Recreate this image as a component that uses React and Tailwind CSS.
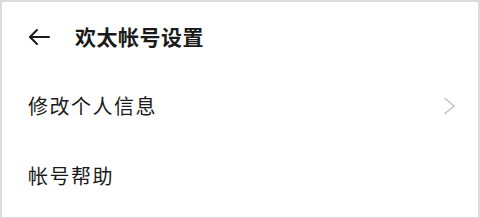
import React from "react";

export default function App() {
  const font = { fontFamily: '"Noto Sans CJK SC", "Noto Sans", sans-serif' };
  return (
    <div
      className="w-[480px] h-[218px] bg-white border-l-2 border-t-2 border-r-2 border-b border-[#dcdcdc] box-border overflow-hidden text-[#1a1a1a]"
      style={font}
    >
      <div className="h-[69px] flex items-center pl-[25px]">
        <svg width="24" height="18" viewBox="0 0 24 18" fill="none" stroke="#1a1a1a" strokeWidth="2" strokeLinecap="round" strokeLinejoin="round">
          <path d="M22 9H3" />
          <path d="M10 2L3 9l7 7" />
        </svg>
        <span className="ml-[24px] text-[21px] font-bold tracking-[0.5px] leading-none">欢太帐号设置</span>
      </div>
      <div className="h-[70px] flex items-center justify-between pl-[26px] pr-[22px]">
        <span className="text-[20px] leading-none tracking-[1.5px]">修改个人信息</span>
        <svg width="13" height="18" viewBox="0 0 13 18" fill="none" stroke="#c4c4c4" strokeWidth="1.6" strokeLinecap="round" strokeLinejoin="round">
          <path d="M2 1.5L11 9l-9 7.5" />
        </svg>
      </div>
      <div className="h-[70px] flex items-center pl-[26px]">
        <span className="text-[20px] leading-none tracking-[1.5px]">帐号帮助</span>
      </div>
    </div>
  );
}
